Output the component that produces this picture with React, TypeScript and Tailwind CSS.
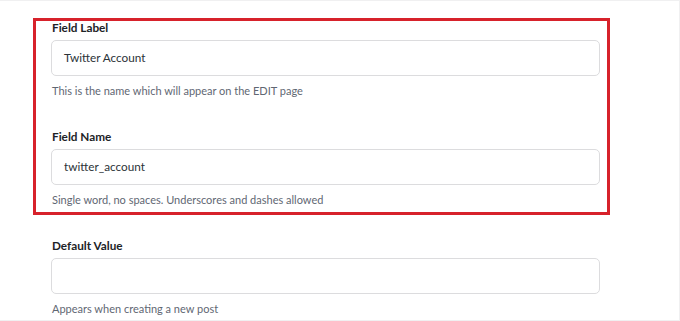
import React from "react";

const fields = [
  { label: "Field Label", value: "Twitter Account", help: "This is the name which will appear on the EDIT page" },
  { label: "Field Name", value: "twitter_account", help: "Single word, no spaces. Underscores and dashes allowed" },
  { label: "Default Value", value: "", help: "Appears when creating a new post" },
];

export default function App() {
  return (
    <div
      className="relative w-[680px] h-[321px] bg-white border-t border-r border-b border-[#f0f0f1] overflow-hidden"
      style={{ fontFamily: 'Lato, "Noto Sans", sans-serif' }}
    >
      <div className="flex flex-col gap-[29px] pt-[18px] pl-[51px] w-[600px]">
        {fields.map((f) => (
          <div key={f.label} className="flex flex-col">
            <label className="text-[11.75px] leading-[18px] font-bold text-[#1d2327] pl-px">{f.label}</label>
            <div className="mt-[3px] h-[36px] border border-[#dcdcde] rounded-[5px] flex items-center pl-[12px] text-[11.75px] text-[#2c3338]">
              {f.value}
            </div>
            <p className="mt-[7px] text-[11px] leading-[16px] text-[#5f6773] pl-px">{f.help}</p>
          </div>
        ))}
      </div>
      <div className="absolute left-[33px] top-[17px] w-[577px] h-[197px] border-[3px] border-[#d7222b] pointer-events-none" />
    </div>
  );
}
